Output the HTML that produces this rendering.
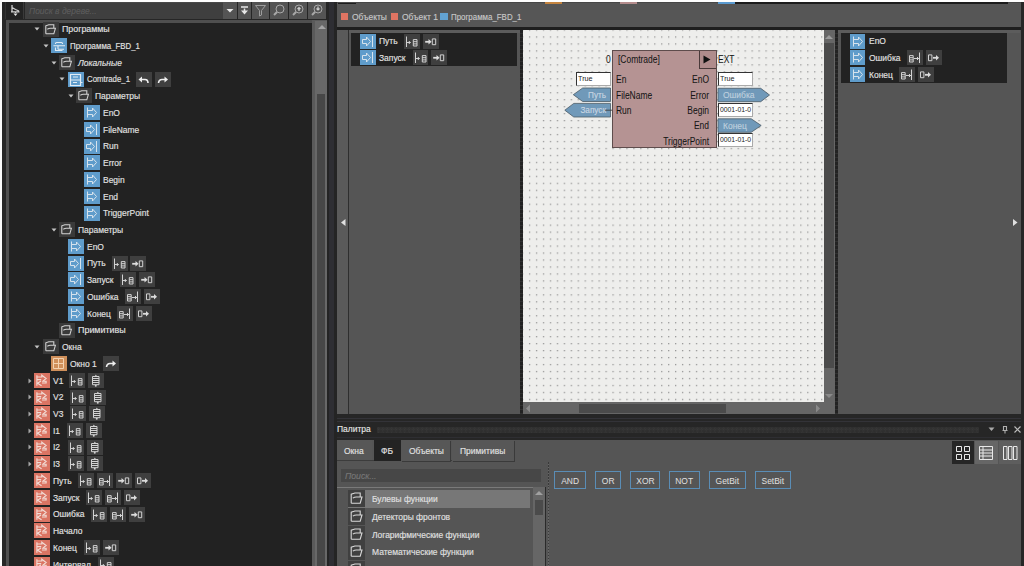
<!DOCTYPE html><html><head><meta charset="utf-8"><style>
html,body{margin:0;padding:0;}
body{width:1024px;height:566px;overflow:hidden;position:relative;background:#262626;font-family:"Liberation Sans",sans-serif;}
div,span,svg{position:absolute;display:block;}
.t{white-space:nowrap;line-height:14px;transform-origin:0 50%;-webkit-text-stroke:0.15px currentColor;}
</style></head><body>
<div style="left:0px;top:0px;width:1024px;height:1.8px;background:#ffffff;"></div>
<div style="left:0px;top:0px;width:2px;height:566px;background:#fafafa;"></div>
<div style="left:2px;top:2px;width:324px;height:564px;background:#262626;"></div>
<div style="left:5px;top:2px;width:19px;height:17px;background:#232323;box-shadow:inset 1px 0 0 #333, inset -1px 0 0 #3a3a3a;"></div>
<svg style="left:9px;top:3.5px;" width="12" height="14" viewBox="0 0 12 14"><path d="M3 1V7.5M3 3.5L6.5 5.5L10 7M2 7.8H10.5M6.5 7.8V9" stroke="#cfcfcf" stroke-width="1.3" fill="none"/><path d="M4.5 9.5H8.5L6.5 12Z" fill="#e6e6e6"/></svg>
<div style="left:25px;top:2px;width:198px;height:17px;background:#3f3f3f;box-shadow:inset 0 1px 0 #4a4a4a;"></div>
<span class="t" style="left:29px;top:3.5px;font-size:9.3px;color:#5c5c5c;transform:scaleX(0.91);font-style:italic;">Поиск в дереве...</span>
<div style="left:223px;top:2px;width:13.5px;height:17px;background:#545454;"></div>
<svg style="left:226px;top:9px;" width="8" height="4" viewBox="0 0 8 4"><path d="M0.5 0H7.5L4 3.5Z" fill="#e8e8e8"/></svg>
<div style="left:237.5px;top:2px;width:13.5px;height:17px;background:#545454;"></div>
<svg style="left:240px;top:6px;" width="9" height="10" viewBox="0 0 9 10"><path d="M1 1H8" stroke="#e8e8e8" stroke-width="1.5"/><path d="M4.5 2.5V5" stroke="#e8e8e8" stroke-width="1.5"/><path d="M1 4.5H8L4.5 8.5Z" fill="#e8e8e8"/></svg>
<div style="left:252px;top:2px;width:17px;height:17px;background:#545454;"></div>
<svg style="left:254px;top:4px;" width="13" height="13" viewBox="0 0 13 13"><path d="M1.5 1.5H11.5L7.5 6.5V11L5.5 12V6.5Z" stroke="#9c9c9c" fill="none" stroke-width="1"/></svg>
<div style="left:270px;top:2px;width:18px;height:17px;background:#545454;"></div>
<svg style="left:272px;top:3px;" width="14" height="14" viewBox="0 0 14 14"><circle cx="8" cy="6" r="4" stroke="#a8a8a8" fill="none" stroke-width="1"/><path d="M5 9L2 12" stroke="#a8a8a8" stroke-width="2"/></svg>
<div style="left:289px;top:2px;width:18px;height:17px;background:#545454;"></div>
<svg style="left:291px;top:3px;" width="14" height="14" viewBox="0 0 14 14"><circle cx="8" cy="6" r="4" stroke="#a8a8a8" fill="none" stroke-width="1"/><path d="M5 9L2 12" stroke="#a8a8a8" stroke-width="2"/><path d="M8 8V4.5M6.5 6L8 4.5L9.5 6" stroke="#cfcfcf" fill="none" stroke-width="1.2"/></svg>
<div style="left:308px;top:2px;width:18px;height:17px;background:#545454;"></div>
<svg style="left:310px;top:3px;" width="14" height="14" viewBox="0 0 14 14"><circle cx="8" cy="6" r="4" stroke="#a8a8a8" fill="none" stroke-width="1"/><path d="M5 9L2 12" stroke="#a8a8a8" stroke-width="2"/><path d="M8 3.5V7M6.5 5.5L8 7L9.5 5.5" stroke="#cfcfcf" fill="none" stroke-width="1.2"/></svg>
<div style="left:6px;top:20px;width:320px;height:546px;background:#4f4f4f;"></div>
<div style="left:8.5px;top:22.7px;width:303.2px;height:544px;background:#222222;"></div>
<div style="left:311.7px;top:20px;width:15.3px;height:546px;background:#5a5a5a;"></div>
<div style="left:315px;top:21px;width:12px;height:545px;background:#686868;"></div>
<svg style="left:316.5px;top:24px;" width="10" height="6" viewBox="0 0 10 6"><path d="M1 5H9L5 1Z" fill="#a4a4a4"/></svg>
<div style="left:316.8px;top:94px;width:8.2px;height:472px;background:#474747;"></div>
<svg style="left:34.15px;top:27.2px;" width="6" height="4" viewBox="0 0 6 4"><path d="M0.5 0.5H5.5L3 3.5Z" fill="#c4c4c4"/></svg>
<svg style="left:42.65px;top:21.5px;background:#3a3a3a;" width="16" height="15" viewBox="0 0 16 15"><path d="M2.8 11.8V3.8L5.8 2.8H10.8V6.3M2.8 11.8H10.8L12.4 6.3H7.4Q5.8 6.3 4.3 7.2" stroke="#d2d2d2" fill="none" stroke-width="1.1"/></svg>
<span class="t" style="left:61.65px;top:22.2px;font-size:9.3px;color:#e2e2e2;transform:scaleX(0.95);">Программы</span>
<svg style="left:42.5px;top:43.93px;" width="6" height="4" viewBox="0 0 6 4"><path d="M0.5 0.5H5.5L3 3.5Z" fill="#c4c4c4"/></svg>
<svg style="left:51.0px;top:38.23px;background:#5f9ccb;" width="16" height="15" viewBox="0 0 16 15"><path d="M4.5 6V5.5Q4.5 4.5 5.5 4.5H10.5Q11.5 4.5 11.5 5.5V6M2.5 7.7H14M4.5 9.5V12.5H11.5M7 7.7V11.3M7 11.3H13" stroke="#e2ecf4" fill="none" stroke-width="1.1"/></svg>
<span class="t" style="left:70.0px;top:38.93px;font-size:9.3px;color:#e2e2e2;transform:scaleX(0.845);">Программа_FBD_1</span>
<svg style="left:50.85px;top:60.66px;" width="6" height="4" viewBox="0 0 6 4"><path d="M0.5 0.5H5.5L3 3.5Z" fill="#c4c4c4"/></svg>
<svg style="left:59.35px;top:54.96px;background:#3a3a3a;" width="16" height="15" viewBox="0 0 16 15"><path d="M2.8 11.8V3.8L5.8 2.8H10.8V6.3M2.8 11.8H10.8L12.4 6.3H7.4Q5.8 6.3 4.3 7.2" stroke="#d2d2d2" fill="none" stroke-width="1.1"/></svg>
<span class="t" style="left:78.35px;top:55.66px;font-size:9.3px;color:#e2e2e2;transform:scaleX(0.91);font-style:italic;">Локальные</span>
<svg style="left:59.2px;top:77.39px;" width="6" height="4" viewBox="0 0 6 4"><path d="M0.5 0.5H5.5L3 3.5Z" fill="#c4c4c4"/></svg>
<svg style="left:67.7px;top:71.69px;background:#5f9ccb;" width="16" height="15" viewBox="0 0 16 15"><path d="M2.5 2.5H12.5V13.5H2.5ZM2.5 8H12.5M5 5H10M5 10.5H9M12.5 10.5H14.5" stroke="#e2ecf4" fill="none" stroke-width="1.2"/></svg>
<span class="t" style="left:86.7px;top:72.39px;font-size:9.3px;color:#e2e2e2;transform:scaleX(0.84);">Comtrade_1</span>
<svg style="left:136.4px;top:71.69px;background:#3f3f3f;" width="16" height="15" viewBox="0 0 16 15"><path d="M4 7.5H9Q12 7.5 12 11" stroke="#f0f0f0" fill="none" stroke-width="1.6"/><path d="M2.5 7.5L6 4.5V10.5Z" fill="#f0f0f0"/></svg>
<svg style="left:155.4px;top:71.69px;background:#3f3f3f;" width="16" height="15" viewBox="0 0 16 15"><path d="M11 7.5H7Q4 7.5 3.5 11" stroke="#f0f0f0" fill="none" stroke-width="1.6"/><path d="M13 7.5L9.5 4.5V10.5Z" fill="#f0f0f0"/></svg>
<svg style="left:67.55px;top:94.12px;" width="6" height="4" viewBox="0 0 6 4"><path d="M0.5 0.5H5.5L3 3.5Z" fill="#c4c4c4"/></svg>
<svg style="left:76.05px;top:88.42px;background:#3a3a3a;" width="16" height="15" viewBox="0 0 16 15"><path d="M2.8 11.8V3.8L5.8 2.8H10.8V6.3M2.8 11.8H10.8L12.4 6.3H7.4Q5.8 6.3 4.3 7.2" stroke="#d2d2d2" fill="none" stroke-width="1.1"/></svg>
<span class="t" style="left:95.05px;top:89.12px;font-size:9.3px;color:#e2e2e2;transform:scaleX(0.91);">Параметры</span>
<svg style="left:84.4px;top:105.15px;background:#5f9ccb;" width="16" height="15" viewBox="0 0 16 15"><path d="M3.5 2.5V12.5M3.5 5.5H8.5V3L12.5 7.5L8.5 12V9.5H3.5" stroke="#d6e2ec" fill="none" stroke-width="1"/></svg>
<span class="t" style="left:103.4px;top:105.85px;font-size:9.3px;color:#e2e2e2;transform:scaleX(0.91);">EnO</span>
<svg style="left:84.4px;top:121.88px;background:#5f9ccb;" width="16" height="15" viewBox="0 0 16 15"><path d="M2.5 5.5H6.5V3L10.5 7.5L6.5 12V9.5H2.5Z M12.5 2V13" stroke="#d6e2ec" fill="none" stroke-width="1"/></svg>
<span class="t" style="left:103.4px;top:122.58000000000001px;font-size:9.3px;color:#e2e2e2;transform:scaleX(0.91);">FileName</span>
<svg style="left:84.4px;top:138.61px;background:#5f9ccb;" width="16" height="15" viewBox="0 0 16 15"><path d="M2.5 5.5H6.5V3L10.5 7.5L6.5 12V9.5H2.5Z M12.5 2V13" stroke="#d6e2ec" fill="none" stroke-width="1"/></svg>
<span class="t" style="left:103.4px;top:139.31px;font-size:9.3px;color:#e2e2e2;transform:scaleX(0.91);">Run</span>
<svg style="left:84.4px;top:155.34px;background:#5f9ccb;" width="16" height="15" viewBox="0 0 16 15"><path d="M3.5 2.5V12.5M3.5 5.5H8.5V3L12.5 7.5L8.5 12V9.5H3.5" stroke="#d6e2ec" fill="none" stroke-width="1"/></svg>
<span class="t" style="left:103.4px;top:156.04px;font-size:9.3px;color:#e2e2e2;transform:scaleX(0.91);">Error</span>
<svg style="left:84.4px;top:172.07px;background:#5f9ccb;" width="16" height="15" viewBox="0 0 16 15"><path d="M3.5 2.5V12.5M3.5 5.5H8.5V3L12.5 7.5L8.5 12V9.5H3.5" stroke="#d6e2ec" fill="none" stroke-width="1"/></svg>
<span class="t" style="left:103.4px;top:172.77px;font-size:9.3px;color:#e2e2e2;transform:scaleX(0.91);">Begin</span>
<svg style="left:84.4px;top:188.8px;background:#5f9ccb;" width="16" height="15" viewBox="0 0 16 15"><path d="M3.5 2.5V12.5M3.5 5.5H8.5V3L12.5 7.5L8.5 12V9.5H3.5" stroke="#d6e2ec" fill="none" stroke-width="1"/></svg>
<span class="t" style="left:103.4px;top:189.5px;font-size:9.3px;color:#e2e2e2;transform:scaleX(0.91);">End</span>
<svg style="left:84.4px;top:205.53px;background:#5f9ccb;" width="16" height="15" viewBox="0 0 16 15"><path d="M3.5 2.5V12.5M3.5 5.5H8.5V3L12.5 7.5L8.5 12V9.5H3.5" stroke="#d6e2ec" fill="none" stroke-width="1"/></svg>
<span class="t" style="left:103.4px;top:206.23px;font-size:9.3px;color:#e2e2e2;transform:scaleX(0.91);">TriggerPoint</span>
<svg style="left:50.85px;top:227.96px;" width="6" height="4" viewBox="0 0 6 4"><path d="M0.5 0.5H5.5L3 3.5Z" fill="#c4c4c4"/></svg>
<svg style="left:59.35px;top:222.26px;background:#3a3a3a;" width="16" height="15" viewBox="0 0 16 15"><path d="M2.8 11.8V3.8L5.8 2.8H10.8V6.3M2.8 11.8H10.8L12.4 6.3H7.4Q5.8 6.3 4.3 7.2" stroke="#d2d2d2" fill="none" stroke-width="1.1"/></svg>
<span class="t" style="left:78.35px;top:222.96px;font-size:9.3px;color:#e2e2e2;transform:scaleX(0.91);">Параметры</span>
<svg style="left:67.7px;top:238.99px;background:#5f9ccb;" width="16" height="15" viewBox="0 0 16 15"><path d="M3.5 2.5V12.5M3.5 5.5H8.5V3L12.5 7.5L8.5 12V9.5H3.5" stroke="#d6e2ec" fill="none" stroke-width="1"/></svg>
<span class="t" style="left:86.7px;top:239.69px;font-size:9.3px;color:#e2e2e2;transform:scaleX(0.91);">EnO</span>
<svg style="left:67.7px;top:255.72px;background:#5f9ccb;" width="16" height="15" viewBox="0 0 16 15"><path d="M2.5 5.5H6.5V3L10.5 7.5L6.5 12V9.5H2.5Z M12.5 2V13" stroke="#d6e2ec" fill="none" stroke-width="1"/></svg>
<span class="t" style="left:86.7px;top:256.42px;font-size:9.3px;color:#e2e2e2;transform:scaleX(0.91);">Путь</span>
<svg style="left:111.8px;top:255.72px;background:#3f3f3f;" width="16" height="15" viewBox="0 0 16 15"><path d="M2.5 2.5V13M3 8.5H6.5M4.8 7L6.3 8.5L4.8 10M9.3 5.6H13V12H9.3ZM9.3 7.7H13M9.3 9.9H13" stroke="#d2d2d2" fill="none" stroke-width="1"/></svg>
<svg style="left:130.2px;top:255.72px;background:#3f3f3f;" width="16" height="15" viewBox="0 0 16 15"><path d="M2.2 7.8H6" stroke="#dcdcdc" stroke-width="1.8"/><path d="M5.5 5L8.6 7.8L5.5 10.6Z" fill="#dcdcdc"/><path d="M9.3 4.9H12.7V10.7H9.3Z" stroke="#d2d2d2" fill="none" stroke-width="1"/></svg>
<svg style="left:67.7px;top:272.45px;background:#5f9ccb;" width="16" height="15" viewBox="0 0 16 15"><path d="M2.5 5.5H6.5V3L10.5 7.5L6.5 12V9.5H2.5Z M12.5 2V13" stroke="#d6e2ec" fill="none" stroke-width="1"/></svg>
<span class="t" style="left:86.7px;top:273.15px;font-size:9.3px;color:#e2e2e2;transform:scaleX(0.91);">Запуск</span>
<svg style="left:120px;top:272.45px;background:#3f3f3f;" width="16" height="15" viewBox="0 0 16 15"><path d="M2.5 2.5V13M3 8.5H6.5M4.8 7L6.3 8.5L4.8 10M9.3 5.6H13V12H9.3ZM9.3 7.7H13M9.3 9.9H13" stroke="#d2d2d2" fill="none" stroke-width="1"/></svg>
<svg style="left:138.9px;top:272.45px;background:#3f3f3f;" width="16" height="15" viewBox="0 0 16 15"><path d="M2.2 7.8H6" stroke="#dcdcdc" stroke-width="1.8"/><path d="M5.5 5L8.6 7.8L5.5 10.6Z" fill="#dcdcdc"/><path d="M9.3 4.9H12.7V10.7H9.3Z" stroke="#d2d2d2" fill="none" stroke-width="1"/></svg>
<svg style="left:67.7px;top:289.18px;background:#5f9ccb;" width="16" height="15" viewBox="0 0 16 15"><path d="M3.5 2.5V12.5M3.5 5.5H8.5V3L12.5 7.5L8.5 12V9.5H3.5" stroke="#d6e2ec" fill="none" stroke-width="1"/></svg>
<span class="t" style="left:86.7px;top:289.88px;font-size:9.3px;color:#e2e2e2;transform:scaleX(0.91);">Ошибка</span>
<svg style="left:124.9px;top:289.18px;background:#3f3f3f;" width="16" height="15" viewBox="0 0 16 15"><path d="M12.5 2.5V13M7 8.5H12M10 7L11.5 8.5L10 10M2.5 5.6H6.2V12H2.5ZM2.5 7.7H6.2M2.5 9.9H6.2" stroke="#d2d2d2" fill="none" stroke-width="1"/></svg>
<svg style="left:143.7px;top:289.18px;background:#3f3f3f;" width="16" height="15" viewBox="0 0 16 15"><path d="M7 7.8H10.5" stroke="#dcdcdc" stroke-width="1.8"/><path d="M10 5L13 7.8L10 10.6Z" fill="#dcdcdc"/><path d="M2.5 4.9H5.9V10.7H2.5Z" stroke="#d2d2d2" fill="none" stroke-width="1"/></svg>
<svg style="left:67.7px;top:305.91px;background:#5f9ccb;" width="16" height="15" viewBox="0 0 16 15"><path d="M3.5 2.5V12.5M3.5 5.5H8.5V3L12.5 7.5L8.5 12V9.5H3.5" stroke="#d6e2ec" fill="none" stroke-width="1"/></svg>
<span class="t" style="left:86.7px;top:306.61px;font-size:9.3px;color:#e2e2e2;transform:scaleX(0.91);">Конец</span>
<svg style="left:117.1px;top:305.91px;background:#3f3f3f;" width="16" height="15" viewBox="0 0 16 15"><path d="M12.5 2.5V13M7 8.5H12M10 7L11.5 8.5L10 10M2.5 5.6H6.2V12H2.5ZM2.5 7.7H6.2M2.5 9.9H6.2" stroke="#d2d2d2" fill="none" stroke-width="1"/></svg>
<svg style="left:135.9px;top:305.91px;background:#3f3f3f;" width="16" height="15" viewBox="0 0 16 15"><path d="M7 7.8H10.5" stroke="#dcdcdc" stroke-width="1.8"/><path d="M10 5L13 7.8L10 10.6Z" fill="#dcdcdc"/><path d="M2.5 4.9H5.9V10.7H2.5Z" stroke="#d2d2d2" fill="none" stroke-width="1"/></svg>
<svg style="left:59.35px;top:322.64px;background:#3a3a3a;" width="16" height="15" viewBox="0 0 16 15"><path d="M2.8 11.8V3.8L5.8 2.8H10.8V6.3M2.8 11.8H10.8L12.4 6.3H7.4Q5.8 6.3 4.3 7.2" stroke="#d2d2d2" fill="none" stroke-width="1.1"/></svg>
<span class="t" style="left:78.35px;top:323.34px;font-size:9.3px;color:#e2e2e2;transform:scaleX(0.96);">Примитивы</span>
<svg style="left:34.15px;top:345.07px;" width="6" height="4" viewBox="0 0 6 4"><path d="M0.5 0.5H5.5L3 3.5Z" fill="#c4c4c4"/></svg>
<svg style="left:42.65px;top:339.37px;background:#3a3a3a;" width="16" height="15" viewBox="0 0 16 15"><path d="M2.8 11.8V3.8L5.8 2.8H10.8V6.3M2.8 11.8H10.8L12.4 6.3H7.4Q5.8 6.3 4.3 7.2" stroke="#d2d2d2" fill="none" stroke-width="1.1"/></svg>
<span class="t" style="left:61.65px;top:340.07px;font-size:9.3px;color:#e2e2e2;transform:scaleX(0.91);">Окна</span>
<svg style="left:51.0px;top:356.1px;background:#cf8f5a;" width="16" height="15" viewBox="0 0 16 15"><path d="M2.5 2.5H12.5V12.5H2.5ZM2.5 7.5H12.5M7.5 2.5V12.5" stroke="#f3d2b0" fill="none" stroke-width="1"/></svg>
<span class="t" style="left:70.0px;top:356.8px;font-size:9.3px;color:#e2e2e2;transform:scaleX(0.91);">Окно 1</span>
<svg style="left:102.8px;top:356.1px;background:#3f3f3f;" width="16" height="15" viewBox="0 0 16 15"><path d="M11 7.5H7Q4 7.5 3.5 11" stroke="#f0f0f0" fill="none" stroke-width="1.6"/><path d="M13 7.5L9.5 4.5V10.5Z" fill="#f0f0f0"/></svg>
<svg style="left:27.8px;top:377.53px;" width="4" height="6" viewBox="0 0 4 6"><path d="M0.5 0.5V5.5L3.5 3Z" fill="#a8a8a8"/></svg>
<svg style="left:34.3px;top:372.83px;background:#da7463;" width="16" height="15" viewBox="0 0 16 15"><path d="M2.9 2.2V12.7M2.9 4H7.8V2.2L12.1 5.5L8.3 8.6M2.9 6.6H7.2M8.8 8.2H12.1V10H8M7 7.9L3.5 10.2L7.6 12.7" stroke="#f2dcd6" fill="none" stroke-width="1.15"/></svg>
<span class="t" style="left:53.3px;top:373.53px;font-size:9.3px;color:#e2e2e2;transform:scaleX(0.91);">V1</span>
<svg style="left:69.2px;top:372.83px;background:#3f3f3f;" width="16" height="15" viewBox="0 0 16 15"><path d="M2.5 2.5V13M3 8.5H6.5M4.8 7L6.3 8.5L4.8 10M9.3 5.6H13V12H9.3ZM9.3 7.7H13M9.3 9.9H13" stroke="#d2d2d2" fill="none" stroke-width="1"/></svg>
<svg style="left:88px;top:372.83px;background:#3f3f3f;" width="16" height="15" viewBox="0 0 16 15"><path d="M4.5 3.5H11V11.7H4.5ZM4.5 5.5H11M4.5 7.5H11M4.5 9.5H11M6.5 3.5L7.75 2.3L9 3.5" stroke="#d2d2d2" fill="none" stroke-width="1"/><circle cx="7.75" cy="12.8" r="1" fill="#d2d2d2"/></svg>
<svg style="left:27.8px;top:394.26px;" width="4" height="6" viewBox="0 0 4 6"><path d="M0.5 0.5V5.5L3.5 3Z" fill="#a8a8a8"/></svg>
<svg style="left:34.3px;top:389.56px;background:#da7463;" width="16" height="15" viewBox="0 0 16 15"><path d="M2.9 2.2V12.7M2.9 4H7.8V2.2L12.1 5.5L8.3 8.6M2.9 6.6H7.2M8.8 8.2H12.1V10H8M7 7.9L3.5 10.2L7.6 12.7" stroke="#f2dcd6" fill="none" stroke-width="1.15"/></svg>
<span class="t" style="left:53.3px;top:390.26px;font-size:9.3px;color:#e2e2e2;transform:scaleX(0.91);">V2</span>
<svg style="left:70.4px;top:389.56px;background:#3f3f3f;" width="16" height="15" viewBox="0 0 16 15"><path d="M2.5 2.5V13M3 8.5H6.5M4.8 7L6.3 8.5L4.8 10M9.3 5.6H13V12H9.3ZM9.3 7.7H13M9.3 9.9H13" stroke="#d2d2d2" fill="none" stroke-width="1"/></svg>
<svg style="left:89.5px;top:389.56px;background:#3f3f3f;" width="16" height="15" viewBox="0 0 16 15"><path d="M4.5 3.5H11V11.7H4.5ZM4.5 5.5H11M4.5 7.5H11M4.5 9.5H11M6.5 3.5L7.75 2.3L9 3.5" stroke="#d2d2d2" fill="none" stroke-width="1"/><circle cx="7.75" cy="12.8" r="1" fill="#d2d2d2"/></svg>
<svg style="left:27.8px;top:410.99px;" width="4" height="6" viewBox="0 0 4 6"><path d="M0.5 0.5V5.5L3.5 3Z" fill="#a8a8a8"/></svg>
<svg style="left:34.3px;top:406.29px;background:#da7463;" width="16" height="15" viewBox="0 0 16 15"><path d="M2.9 2.2V12.7M2.9 4H7.8V2.2L12.1 5.5L8.3 8.6M2.9 6.6H7.2M8.8 8.2H12.1V10H8M7 7.9L3.5 10.2L7.6 12.7" stroke="#f2dcd6" fill="none" stroke-width="1.15"/></svg>
<span class="t" style="left:53.3px;top:406.99px;font-size:9.3px;color:#e2e2e2;transform:scaleX(0.91);">V3</span>
<svg style="left:70.3px;top:406.29px;background:#3f3f3f;" width="16" height="15" viewBox="0 0 16 15"><path d="M2.5 2.5V13M3 8.5H6.5M4.8 7L6.3 8.5L4.8 10M9.3 5.6H13V12H9.3ZM9.3 7.7H13M9.3 9.9H13" stroke="#d2d2d2" fill="none" stroke-width="1"/></svg>
<svg style="left:89px;top:406.29px;background:#3f3f3f;" width="16" height="15" viewBox="0 0 16 15"><path d="M4.5 3.5H11V11.7H4.5ZM4.5 5.5H11M4.5 7.5H11M4.5 9.5H11M6.5 3.5L7.75 2.3L9 3.5" stroke="#d2d2d2" fill="none" stroke-width="1"/><circle cx="7.75" cy="12.8" r="1" fill="#d2d2d2"/></svg>
<svg style="left:27.8px;top:427.72px;" width="4" height="6" viewBox="0 0 4 6"><path d="M0.5 0.5V5.5L3.5 3Z" fill="#a8a8a8"/></svg>
<svg style="left:34.3px;top:423.02px;background:#da7463;" width="16" height="15" viewBox="0 0 16 15"><path d="M2.9 2.2V12.7M2.9 4H7.8V2.2L12.1 5.5L8.3 8.6M2.9 6.6H7.2M8.8 8.2H12.1V10H8M7 7.9L3.5 10.2L7.6 12.7" stroke="#f2dcd6" fill="none" stroke-width="1.15"/></svg>
<span class="t" style="left:53.3px;top:423.72px;font-size:9.3px;color:#e2e2e2;transform:scaleX(0.91);">I1</span>
<svg style="left:67.2px;top:423.02px;background:#3f3f3f;" width="16" height="15" viewBox="0 0 16 15"><path d="M2.5 2.5V13M3 8.5H6.5M4.8 7L6.3 8.5L4.8 10M9.3 5.6H13V12H9.3ZM9.3 7.7H13M9.3 9.9H13" stroke="#d2d2d2" fill="none" stroke-width="1"/></svg>
<svg style="left:85.6px;top:423.02px;background:#3f3f3f;" width="16" height="15" viewBox="0 0 16 15"><path d="M4.5 3.5H11V11.7H4.5ZM4.5 5.5H11M4.5 7.5H11M4.5 9.5H11M6.5 3.5L7.75 2.3L9 3.5" stroke="#d2d2d2" fill="none" stroke-width="1"/><circle cx="7.75" cy="12.8" r="1" fill="#d2d2d2"/></svg>
<svg style="left:27.8px;top:444.45px;" width="4" height="6" viewBox="0 0 4 6"><path d="M0.5 0.5V5.5L3.5 3Z" fill="#a8a8a8"/></svg>
<svg style="left:34.3px;top:439.75px;background:#da7463;" width="16" height="15" viewBox="0 0 16 15"><path d="M2.9 2.2V12.7M2.9 4H7.8V2.2L12.1 5.5L8.3 8.6M2.9 6.6H7.2M8.8 8.2H12.1V10H8M7 7.9L3.5 10.2L7.6 12.7" stroke="#f2dcd6" fill="none" stroke-width="1.15"/></svg>
<span class="t" style="left:53.3px;top:440.45px;font-size:9.3px;color:#e2e2e2;transform:scaleX(0.91);">I2</span>
<svg style="left:67.6px;top:439.75px;background:#3f3f3f;" width="16" height="15" viewBox="0 0 16 15"><path d="M2.5 2.5V13M3 8.5H6.5M4.8 7L6.3 8.5L4.8 10M9.3 5.6H13V12H9.3ZM9.3 7.7H13M9.3 9.9H13" stroke="#d2d2d2" fill="none" stroke-width="1"/></svg>
<svg style="left:86.6px;top:439.75px;background:#3f3f3f;" width="16" height="15" viewBox="0 0 16 15"><path d="M4.5 3.5H11V11.7H4.5ZM4.5 5.5H11M4.5 7.5H11M4.5 9.5H11M6.5 3.5L7.75 2.3L9 3.5" stroke="#d2d2d2" fill="none" stroke-width="1"/><circle cx="7.75" cy="12.8" r="1" fill="#d2d2d2"/></svg>
<svg style="left:27.8px;top:461.18px;" width="4" height="6" viewBox="0 0 4 6"><path d="M0.5 0.5V5.5L3.5 3Z" fill="#a8a8a8"/></svg>
<svg style="left:34.3px;top:456.48px;background:#da7463;" width="16" height="15" viewBox="0 0 16 15"><path d="M2.9 2.2V12.7M2.9 4H7.8V2.2L12.1 5.5L8.3 8.6M2.9 6.6H7.2M8.8 8.2H12.1V10H8M7 7.9L3.5 10.2L7.6 12.7" stroke="#f2dcd6" fill="none" stroke-width="1.15"/></svg>
<span class="t" style="left:53.3px;top:457.18px;font-size:9.3px;color:#e2e2e2;transform:scaleX(0.91);">I3</span>
<svg style="left:67.6px;top:456.48px;background:#3f3f3f;" width="16" height="15" viewBox="0 0 16 15"><path d="M2.5 2.5V13M3 8.5H6.5M4.8 7L6.3 8.5L4.8 10M9.3 5.6H13V12H9.3ZM9.3 7.7H13M9.3 9.9H13" stroke="#d2d2d2" fill="none" stroke-width="1"/></svg>
<svg style="left:86.6px;top:456.48px;background:#3f3f3f;" width="16" height="15" viewBox="0 0 16 15"><path d="M4.5 3.5H11V11.7H4.5ZM4.5 5.5H11M4.5 7.5H11M4.5 9.5H11M6.5 3.5L7.75 2.3L9 3.5" stroke="#d2d2d2" fill="none" stroke-width="1"/><circle cx="7.75" cy="12.8" r="1" fill="#d2d2d2"/></svg>
<svg style="left:34.3px;top:473.21px;background:#da7463;" width="16" height="15" viewBox="0 0 16 15"><path d="M2.9 2.2V12.7M2.9 4H7.8V2.2L12.1 5.5L8.3 8.6M2.9 6.6H7.2M8.8 8.2H12.1V10H8M7 7.9L3.5 10.2L7.6 12.7" stroke="#f2dcd6" fill="none" stroke-width="1.15"/></svg>
<span class="t" style="left:53.3px;top:473.91px;font-size:9.3px;color:#e2e2e2;transform:scaleX(0.91);">Путь</span>
<svg style="left:78px;top:473.21px;background:#3f3f3f;" width="16" height="15" viewBox="0 0 16 15"><path d="M2.5 2.5V13M3 8.5H6.5M4.8 7L6.3 8.5L4.8 10M9.3 5.6H13V12H9.3ZM9.3 7.7H13M9.3 9.9H13" stroke="#d2d2d2" fill="none" stroke-width="1"/></svg>
<svg style="left:97.1px;top:473.21px;background:#3f3f3f;" width="16" height="15" viewBox="0 0 16 15"><path d="M12.5 2.5V13M7 8.5H12M10 7L11.5 8.5L10 10M2.5 5.6H6.2V12H2.5ZM2.5 7.7H6.2M2.5 9.9H6.2" stroke="#d2d2d2" fill="none" stroke-width="1"/></svg>
<svg style="left:116.1px;top:473.21px;background:#3f3f3f;" width="16" height="15" viewBox="0 0 16 15"><path d="M2.2 7.8H6" stroke="#dcdcdc" stroke-width="1.8"/><path d="M5.5 5L8.6 7.8L5.5 10.6Z" fill="#dcdcdc"/><path d="M9.3 4.9H12.7V10.7H9.3Z" stroke="#d2d2d2" fill="none" stroke-width="1"/></svg>
<svg style="left:135.2px;top:473.21px;background:#3f3f3f;" width="16" height="15" viewBox="0 0 16 15"><path d="M7 7.8H10.5" stroke="#dcdcdc" stroke-width="1.8"/><path d="M10 5L13 7.8L10 10.6Z" fill="#dcdcdc"/><path d="M2.5 4.9H5.9V10.7H2.5Z" stroke="#d2d2d2" fill="none" stroke-width="1"/></svg>
<svg style="left:34.3px;top:489.94px;background:#da7463;" width="16" height="15" viewBox="0 0 16 15"><path d="M2.9 2.2V12.7M2.9 4H7.8V2.2L12.1 5.5L8.3 8.6M2.9 6.6H7.2M8.8 8.2H12.1V10H8M7 7.9L3.5 10.2L7.6 12.7" stroke="#f2dcd6" fill="none" stroke-width="1.15"/></svg>
<span class="t" style="left:53.3px;top:490.64px;font-size:9.3px;color:#e2e2e2;transform:scaleX(0.91);">Запуск</span>
<svg style="left:86.2px;top:489.94px;background:#3f3f3f;" width="16" height="15" viewBox="0 0 16 15"><path d="M2.5 2.5V13M3 8.5H6.5M4.8 7L6.3 8.5L4.8 10M9.3 5.6H13V12H9.3ZM9.3 7.7H13M9.3 9.9H13" stroke="#d2d2d2" fill="none" stroke-width="1"/></svg>
<svg style="left:105.2px;top:489.94px;background:#3f3f3f;" width="16" height="15" viewBox="0 0 16 15"><path d="M12.5 2.5V13M7 8.5H12M10 7L11.5 8.5L10 10M2.5 5.6H6.2V12H2.5ZM2.5 7.7H6.2M2.5 9.9H6.2" stroke="#d2d2d2" fill="none" stroke-width="1"/></svg>
<svg style="left:124.3px;top:489.94px;background:#3f3f3f;" width="16" height="15" viewBox="0 0 16 15"><path d="M7 7.8H10.5" stroke="#dcdcdc" stroke-width="1.8"/><path d="M10 5L13 7.8L10 10.6Z" fill="#dcdcdc"/><path d="M2.5 4.9H5.9V10.7H2.5Z" stroke="#d2d2d2" fill="none" stroke-width="1"/></svg>
<svg style="left:34.3px;top:506.67px;background:#da7463;" width="16" height="15" viewBox="0 0 16 15"><path d="M2.9 2.2V12.7M2.9 4H7.8V2.2L12.1 5.5L8.3 8.6M2.9 6.6H7.2M8.8 8.2H12.1V10H8M7 7.9L3.5 10.2L7.6 12.7" stroke="#f2dcd6" fill="none" stroke-width="1.15"/></svg>
<span class="t" style="left:53.3px;top:507.37px;font-size:9.3px;color:#e2e2e2;transform:scaleX(0.91);">Ошибка</span>
<svg style="left:91.4px;top:506.67px;background:#3f3f3f;" width="16" height="15" viewBox="0 0 16 15"><path d="M2.5 2.5V13M3 8.5H6.5M4.8 7L6.3 8.5L4.8 10M9.3 5.6H13V12H9.3ZM9.3 7.7H13M9.3 9.9H13" stroke="#d2d2d2" fill="none" stroke-width="1"/></svg>
<svg style="left:110px;top:506.67px;background:#3f3f3f;" width="16" height="15" viewBox="0 0 16 15"><path d="M12.5 2.5V13M7 8.5H12M10 7L11.5 8.5L10 10M2.5 5.6H6.2V12H2.5ZM2.5 7.7H6.2M2.5 9.9H6.2" stroke="#d2d2d2" fill="none" stroke-width="1"/></svg>
<svg style="left:129.1px;top:506.67px;background:#3f3f3f;" width="16" height="15" viewBox="0 0 16 15"><path d="M2.2 7.8H6" stroke="#dcdcdc" stroke-width="1.8"/><path d="M5.5 5L8.6 7.8L5.5 10.6Z" fill="#dcdcdc"/><path d="M9.3 4.9H12.7V10.7H9.3Z" stroke="#d2d2d2" fill="none" stroke-width="1"/></svg>
<svg style="left:34.3px;top:523.4px;background:#da7463;" width="16" height="15" viewBox="0 0 16 15"><path d="M2.9 2.2V12.7M2.9 4H7.8V2.2L12.1 5.5L8.3 8.6M2.9 6.6H7.2M8.8 8.2H12.1V10H8M7 7.9L3.5 10.2L7.6 12.7" stroke="#f2dcd6" fill="none" stroke-width="1.15"/></svg>
<span class="t" style="left:53.3px;top:524.1px;font-size:9.3px;color:#e2e2e2;transform:scaleX(0.91);">Начало</span>
<svg style="left:34.3px;top:540.13px;background:#da7463;" width="16" height="15" viewBox="0 0 16 15"><path d="M2.9 2.2V12.7M2.9 4H7.8V2.2L12.1 5.5L8.3 8.6M2.9 6.6H7.2M8.8 8.2H12.1V10H8M7 7.9L3.5 10.2L7.6 12.7" stroke="#f2dcd6" fill="none" stroke-width="1.15"/></svg>
<span class="t" style="left:53.3px;top:540.83px;font-size:9.3px;color:#e2e2e2;transform:scaleX(0.91);">Конец</span>
<svg style="left:84.1px;top:540.13px;background:#3f3f3f;" width="16" height="15" viewBox="0 0 16 15"><path d="M2.5 2.5V13M3 8.5H6.5M4.8 7L6.3 8.5L4.8 10M9.3 5.6H13V12H9.3ZM9.3 7.7H13M9.3 9.9H13" stroke="#d2d2d2" fill="none" stroke-width="1"/></svg>
<svg style="left:102.8px;top:540.13px;background:#3f3f3f;" width="16" height="15" viewBox="0 0 16 15"><path d="M2.2 7.8H6" stroke="#dcdcdc" stroke-width="1.8"/><path d="M5.5 5L8.6 7.8L5.5 10.6Z" fill="#dcdcdc"/><path d="M9.3 4.9H12.7V10.7H9.3Z" stroke="#d2d2d2" fill="none" stroke-width="1"/></svg>
<svg style="left:34.3px;top:556.86px;background:#da7463;" width="16" height="15" viewBox="0 0 16 15"><path d="M2.9 2.2V12.7M2.9 4H7.8V2.2L12.1 5.5L8.3 8.6M2.9 6.6H7.2M8.8 8.2H12.1V10H8M7 7.9L3.5 10.2L7.6 12.7" stroke="#f2dcd6" fill="none" stroke-width="1.15"/></svg>
<span class="t" style="left:53.3px;top:557.56px;font-size:9.3px;color:#e2e2e2;transform:scaleX(0.91);">Интервал</span>
<svg style="left:97.6px;top:556.86px;background:#3f3f3f;" width="16" height="15" viewBox="0 0 16 15"><path d="M2.5 2.5V13M3 8.5H6.5M4.8 7L6.3 8.5L4.8 10M9.3 5.6H13V12H9.3ZM9.3 7.7H13M9.3 9.9H13" stroke="#d2d2d2" fill="none" stroke-width="1"/></svg>
<div style="left:327px;top:20px;width:9.5px;height:546px;background:#242424;"></div>
<div style="left:326px;top:2px;width:10.5px;height:18px;background:#262626;"></div>
<div style="left:328.8px;top:2px;width:5.5px;height:564px;background:#2e2e33;"></div>
<div style="left:336.5px;top:2px;width:684.5px;height:25px;background:#565656;"></div>
<div style="left:1021px;top:2px;width:3px;height:564px;background:#262626;"></div>
<div style="left:338px;top:2px;width:17.5px;height:2px;background:#1c1c1c;"></div>
<div style="left:336.5px;top:2px;width:684.5px;height:1px;background:#484848;"></div>
<div style="left:544.6px;top:2px;width:17px;height:2px;background:#c4843f;"></div>
<div style="left:619.5px;top:2px;width:17.5px;height:2px;background:#b48c8c;"></div>
<div style="left:718px;top:2px;width:17px;height:2px;background:#5a9ad0;"></div>
<div style="left:735px;top:2px;width:272.5px;height:2px;background:#1c1c1c;"></div>
<div style="left:341px;top:13px;width:7px;height:7px;background:#e07462;"></div>
<span class="t" style="left:352px;top:9.5px;font-size:9.3px;color:#c8c8c8;transform:scaleX(0.91);">Объекты</span>
<div style="left:391px;top:13px;width:7px;height:7px;background:#e07462;"></div>
<span class="t" style="left:402px;top:9.5px;font-size:9.3px;color:#c8c8c8;transform:scaleX(0.91);">Объект 1</span>
<div style="left:440px;top:13px;width:7.5px;height:7px;background:#62a2d2;"></div>
<span class="t" style="left:451px;top:9.5px;font-size:9.3px;color:#c8c8c8;transform:scaleX(0.85);">Программа_FBD_1</span>
<div style="left:336.5px;top:27px;width:684.5px;height:3px;background:#1e1e1e;"></div>
<div style="left:336.5px;top:30px;width:684.5px;height:384px;background:#555555;"></div>
<div style="left:337px;top:30px;width:11px;height:384px;background:#5a5a5a;"></div>
<div style="left:348px;top:30px;width:1px;height:384px;background:#2e2e2e;"></div>
<div style="left:349px;top:30px;width:171px;height:3px;background:#5c5c5c;"></div>
<div style="left:351px;top:33px;width:165.5px;height:33px;background:#222222;"></div>
<svg style="left:341px;top:219px;" width="5" height="7" viewBox="0 0 5 7"><path d="M4.5 0V7L0 3.5Z" fill="#e0e0e0"/></svg>
<svg style="left:360px;top:33.8px;background:#5f9ccb;" width="16" height="15" viewBox="0 0 16 15"><path d="M2.5 5.5H6.5V3L10.5 7.5L6.5 12V9.5H2.5Z M12.5 2V13" stroke="#d6e2ec" fill="none" stroke-width="1"/></svg>
<span class="t" style="left:379px;top:34.3px;font-size:9.3px;color:#e2e2e2;transform:scaleX(0.91);">Путь</span>
<svg style="left:404.3px;top:33.8px;background:#3f3f3f;" width="15.5" height="15" viewBox="0 0 15.5 15"><path d="M2.5 2.5V13M3 8.5H6.5M4.8 7L6.3 8.5L4.8 10M9.3 5.6H13V12H9.3ZM9.3 7.7H13M9.3 9.9H13" stroke="#d2d2d2" fill="none" stroke-width="1"/></svg>
<svg style="left:423px;top:33.8px;background:#3f3f3f;" width="15.5" height="15" viewBox="0 0 15.5 15"><path d="M2.2 7.8H6" stroke="#dcdcdc" stroke-width="1.8"/><path d="M5.5 5L8.6 7.8L5.5 10.6Z" fill="#dcdcdc"/><path d="M9.3 4.9H12.7V10.7H9.3Z" stroke="#d2d2d2" fill="none" stroke-width="1"/></svg>
<svg style="left:360px;top:50.199999999999996px;background:#5f9ccb;" width="16" height="15" viewBox="0 0 16 15"><path d="M2.5 5.5H6.5V3L10.5 7.5L6.5 12V9.5H2.5Z M12.5 2V13" stroke="#d6e2ec" fill="none" stroke-width="1"/></svg>
<span class="t" style="left:379px;top:50.699999999999996px;font-size:9.3px;color:#e2e2e2;transform:scaleX(0.91);">Запуск</span>
<svg style="left:412.6px;top:50.199999999999996px;background:#3f3f3f;" width="15.5" height="15" viewBox="0 0 15.5 15"><path d="M2.5 2.5V13M3 8.5H6.5M4.8 7L6.3 8.5L4.8 10M9.3 5.6H13V12H9.3ZM9.3 7.7H13M9.3 9.9H13" stroke="#d2d2d2" fill="none" stroke-width="1"/></svg>
<svg style="left:431px;top:50.199999999999996px;background:#3f3f3f;" width="15.5" height="15" viewBox="0 0 15.5 15"><path d="M2.2 7.8H6" stroke="#dcdcdc" stroke-width="1.8"/><path d="M5.5 5L8.6 7.8L5.5 10.6Z" fill="#dcdcdc"/><path d="M9.3 4.9H12.7V10.7H9.3Z" stroke="#d2d2d2" fill="none" stroke-width="1"/></svg>
<div style="left:520px;top:30px;width:2.5px;height:384px;background:repeating-linear-gradient(to bottom,#222 0 3px,#303030 3px 4px);"></div>
<svg style="left:522.5px;top:30px;background:#eeeeec" width="301" height="372" viewBox="0 0 301 372">
<defs><pattern id="dots" x="5.95" y="6.35" width="6.955" height="6.97" patternUnits="userSpaceOnUse"><rect x="0" y="0" width="1.3" height="1.3" fill="#979797"/></pattern></defs>
<rect x="0" y="0" width="301" height="372" fill="url(#dots)"/>
</svg>
<div style="left:823.5px;top:30px;width:11.5px;height:384px;background:#666666;"></div>
<div style="left:823.5px;top:43px;width:10.5px;height:325px;background:#4b4b4b;"></div>
<svg style="left:824px;top:34px;" width="10" height="6" viewBox="0 0 10 6"><path d="M1 5H9L5 1Z" fill="#9a9a9a"/></svg>
<svg style="left:824px;top:393px;" width="10" height="6" viewBox="0 0 10 6"><path d="M1 1H9L5 5Z" fill="#8a8a8a"/></svg>
<div style="left:522.5px;top:402px;width:301px;height:12px;background:#666666;"></div>
<div style="left:579.4px;top:403.7px;width:147px;height:9.5px;background:#4b4b4b;"></div>
<svg style="left:525px;top:404px;" width="6" height="9" viewBox="0 0 6 9"><path d="M5 0.5V8.5L1 4.5Z" fill="#8a8a8a"/></svg>
<svg style="left:815px;top:404px;" width="6" height="9" viewBox="0 0 6 9"><path d="M1 0.5V8.5L5 4.5Z" fill="#8a8a8a"/></svg>
<div style="left:835px;top:30px;width:3px;height:384px;background:repeating-linear-gradient(to bottom,#222 0 3px,#303030 3px 4px);"></div>
<div style="left:838px;top:30px;width:182px;height:3px;background:#5c5c5c;"></div>
<div style="left:841px;top:33px;width:166px;height:49.5px;background:#222222;"></div>
<svg style="left:1012.5px;top:219px;" width="5" height="7" viewBox="0 0 5 7"><path d="M0 0V7L4.5 3.5Z" fill="#e0e0e0"/></svg>
<svg style="left:849.6px;top:33.8px;background:#5f9ccb;" width="15.5" height="15" viewBox="0 0 15.5 15"><path d="M3.5 2.5V12.5M3.5 5.5H8.5V3L12.5 7.5L8.5 12V9.5H3.5" stroke="#d6e2ec" fill="none" stroke-width="1"/></svg>
<span class="t" style="left:868.7px;top:34.3px;font-size:9.3px;color:#e2e2e2;transform:scaleX(0.91);">EnO</span>
<svg style="left:849.6px;top:50.4px;background:#5f9ccb;" width="15.5" height="15" viewBox="0 0 15.5 15"><path d="M3.5 2.5V12.5M3.5 5.5H8.5V3L12.5 7.5L8.5 12V9.5H3.5" stroke="#d6e2ec" fill="none" stroke-width="1"/></svg>
<span class="t" style="left:868.7px;top:50.9px;font-size:9.3px;color:#e2e2e2;transform:scaleX(0.91);">Ошибка</span>
<svg style="left:907px;top:50.4px;background:#3f3f3f;" width="15.5" height="15" viewBox="0 0 15.5 15"><path d="M12.5 2.5V13M7 8.5H12M10 7L11.5 8.5L10 10M2.5 5.6H6.2V12H2.5ZM2.5 7.7H6.2M2.5 9.9H6.2" stroke="#d2d2d2" fill="none" stroke-width="1"/></svg>
<svg style="left:926px;top:50.4px;background:#3f3f3f;" width="15.5" height="15" viewBox="0 0 15.5 15"><path d="M7 7.8H10.5" stroke="#dcdcdc" stroke-width="1.8"/><path d="M10 5L13 7.8L10 10.6Z" fill="#dcdcdc"/><path d="M2.5 4.9H5.9V10.7H2.5Z" stroke="#d2d2d2" fill="none" stroke-width="1"/></svg>
<svg style="left:849.6px;top:67.0px;background:#5f9ccb;" width="15.5" height="15" viewBox="0 0 15.5 15"><path d="M3.5 2.5V12.5M3.5 5.5H8.5V3L12.5 7.5L8.5 12V9.5H3.5" stroke="#d6e2ec" fill="none" stroke-width="1"/></svg>
<span class="t" style="left:868.7px;top:67.5px;font-size:9.3px;color:#e2e2e2;transform:scaleX(0.91);">Конец</span>
<svg style="left:899.2px;top:67.0px;background:#3f3f3f;" width="15.5" height="15" viewBox="0 0 15.5 15"><path d="M12.5 2.5V13M7 8.5H12M10 7L11.5 8.5L10 10M2.5 5.6H6.2V12H2.5ZM2.5 7.7H6.2M2.5 9.9H6.2" stroke="#d2d2d2" fill="none" stroke-width="1"/></svg>
<svg style="left:918.2px;top:67.0px;background:#3f3f3f;" width="15.5" height="15" viewBox="0 0 15.5 15"><path d="M7 7.8H10.5" stroke="#dcdcdc" stroke-width="1.8"/><path d="M10 5L13 7.8L10 10.6Z" fill="#dcdcdc"/><path d="M2.5 4.9H5.9V10.7H2.5Z" stroke="#d2d2d2" fill="none" stroke-width="1"/></svg>
<div style="left:336.5px;top:414px;width:684.5px;height:152px;background:#262626;"></div>
<div style="left:336.5px;top:417.5px;width:684.5px;height:1px;background:#333338;"></div>
<div style="left:336.5px;top:421px;width:684.5px;height:1px;background:#333338;"></div>
<div style="left:336.5px;top:427px;width:642px;height:6px;background:radial-gradient(circle,#3a3a3a 0.7px,transparent 1px) 0 0/2.6px 2.6px,radial-gradient(circle,#3a3a3a 0.7px,transparent 1px) 1.3px 1.3px/2.6px 2.6px;"></div>
<div style="left:336.5px;top:437px;width:684.5px;height:1px;background:#2e2e32;"></div>
<div style="left:336.5px;top:423px;width:40px;height:12px;background:#262626;"></div>
<span class="t" style="left:337px;top:422px;font-size:9.3px;color:#e6e6e6;transform:scaleX(0.91);">Палитра</span>
<svg style="left:988px;top:427px;" width="8" height="5" viewBox="0 0 8 5"><path d="M0.5 0.5H6.5L3.5 4Z" fill="#aaaaaa"/></svg>
<svg style="left:1000.5px;top:425px;" width="8" height="10" viewBox="0 0 8 10"><path d="M2.5 1.5H5.5V5.5H2.5Z M1.5 5.5H6.5M4 5.5V8.5" stroke="#b0b0b0" fill="none" stroke-width="1.1"/></svg>
<svg style="left:1013px;top:425px;" width="9" height="9" viewBox="0 0 9 9"><path d="M1.5 1.5L7.5 7.5M7.5 1.5L1.5 7.5" stroke="#bcbcbc" stroke-width="1.2"/></svg>
<div style="left:336.5px;top:440px;width:684.5px;height:126px;background:#555555;"></div>
<div style="left:336.5px;top:440px;width:35.5px;height:20.5px;background:#575757;"></div>
<span class="t" style="left:344.3px;top:443.5px;font-size:9.3px;color:#e2e2e2;transform:scaleX(0.91);">Окна</span>
<div style="left:336.5px;top:460px;width:177.5px;height:1px;background:#3c3c3c;"></div>
<div style="left:374px;top:440px;width:26.5px;height:20.5px;background:#232323;"></div>
<span class="t" style="left:380.5px;top:443.5px;font-size:9.3px;color:#e2e2e2;transform:scaleX(0.91);">ФБ</span>
<div style="left:401.2px;top:440px;width:49.3px;height:20.5px;background:#575757;box-shadow:1px 1px 0 #3a3a3a;"></div>
<span class="t" style="left:409px;top:443.5px;font-size:9.3px;color:#e2e2e2;transform:scaleX(0.91);">Объекты</span>
<div style="left:451.5px;top:440px;width:62px;height:20.5px;background:#575757;box-shadow:1px 1px 0 #3a3a3a;"></div>
<span class="t" style="left:459.5px;top:443.5px;font-size:9.3px;color:#e2e2e2;transform:scaleX(0.91);">Примитивы</span>
<div style="left:341px;top:468.5px;width:200px;height:13.5px;background:#474747;"></div>
<span class="t" style="left:345px;top:468.5px;font-size:9.5px;color:#777777;transform:scaleX(0.91);font-style:italic;">Поиск...</span>
<div style="left:336.5px;top:486.5px;width:197px;height:1.2px;background:#7a7a7a;"></div>
<div style="left:348px;top:490px;width:182px;height:17.8px;background:#777777;"></div>
<svg style="left:348.3px;top:490.0px;background:#404040;" width="17" height="17" viewBox="0 0 17 17"><path d="M3.2 13.2V4.1L6.9 3H12.2V7M3.2 13.2H12.2L14 7H8.3Q6.5 7 4.8 8.1" stroke="#d8d8d8" fill="none" stroke-width="1.1"/></svg>
<span class="t" style="left:372px;top:492.0px;font-size:9.3px;color:#e0e0e0;transform:scaleX(0.91);">Булевы функции</span>
<svg style="left:348.3px;top:507.8px;background:#404040;" width="17" height="17" viewBox="0 0 17 17"><path d="M3.2 13.2V4.1L6.9 3H12.2V7M3.2 13.2H12.2L14 7H8.3Q6.5 7 4.8 8.1" stroke="#d8d8d8" fill="none" stroke-width="1.1"/></svg>
<span class="t" style="left:372px;top:509.79999999999995px;font-size:9.3px;color:#e0e0e0;transform:scaleX(0.91);">Детекторы фронтов</span>
<svg style="left:348.3px;top:525.6px;background:#404040;" width="17" height="17" viewBox="0 0 17 17"><path d="M3.2 13.2V4.1L6.9 3H12.2V7M3.2 13.2H12.2L14 7H8.3Q6.5 7 4.8 8.1" stroke="#d8d8d8" fill="none" stroke-width="1.1"/></svg>
<span class="t" style="left:372px;top:527.6px;font-size:9.3px;color:#e0e0e0;transform:scaleX(0.91);">Логарифмические функции</span>
<svg style="left:348.3px;top:543.4px;background:#404040;" width="17" height="17" viewBox="0 0 17 17"><path d="M3.2 13.2V4.1L6.9 3H12.2V7M3.2 13.2H12.2L14 7H8.3Q6.5 7 4.8 8.1" stroke="#d8d8d8" fill="none" stroke-width="1.1"/></svg>
<span class="t" style="left:372px;top:545.4px;font-size:9.3px;color:#e0e0e0;transform:scaleX(0.91);">Математические функции</span>
<svg style="left:348.3px;top:561.2px;background:#404040;" width="17" height="17" viewBox="0 0 17 17"><path d="M3.2 13.2V4.1L6.9 3H12.2V7M3.2 13.2H12.2L14 7H8.3Q6.5 7 4.8 8.1" stroke="#d8d8d8" fill="none" stroke-width="1.1"/></svg>
<div style="left:533px;top:487px;width:12px;height:79px;background:#666666;"></div>
<svg style="left:534px;top:490px;" width="10" height="6" viewBox="0 0 10 6"><path d="M1 5H9L5 1Z" fill="#a0a0a0"/></svg>
<div style="left:535px;top:500px;width:8px;height:15px;background:#4b4b4b;"></div>
<div style="left:545px;top:487px;width:1px;height:79px;background:#2a2a2a;"></div>
<div style="left:547.5px;top:462px;width:1.5px;height:104px;background:repeating-linear-gradient(to bottom,#3a3a3a 0 1.5px,#666 1.5px 3px);"></div>
<div style="left:554px;top:471.3px;width:30px;height:15.5px;border:1.7px solid #5a8db6;color:#e0e0e0;font-size:9.6px;line-height:18px;text-align:center;"><span style="position:static;display:inline-block;transform:scaleX(0.88)">AND</span></div>
<div style="left:595px;top:471.3px;width:24px;height:15.5px;border:1.7px solid #5a8db6;color:#e0e0e0;font-size:9.6px;line-height:18px;text-align:center;"><span style="position:static;display:inline-block;transform:scaleX(0.88)">OR</span></div>
<div style="left:630px;top:471.3px;width:28px;height:15.5px;border:1.7px solid #5a8db6;color:#e0e0e0;font-size:9.6px;line-height:18px;text-align:center;"><span style="position:static;display:inline-block;transform:scaleX(0.88)">XOR</span></div>
<div style="left:669px;top:471.3px;width:29px;height:15.5px;border:1.7px solid #5a8db6;color:#e0e0e0;font-size:9.6px;line-height:18px;text-align:center;"><span style="position:static;display:inline-block;transform:scaleX(0.88)">NOT</span></div>
<div style="left:709.3px;top:471.3px;width:34.700000000000045px;height:15.5px;border:1.7px solid #5a8db6;color:#e0e0e0;font-size:9.6px;line-height:18px;text-align:center;"><span style="position:static;display:inline-block;transform:scaleX(0.88)">GetBit</span></div>
<div style="left:755.2px;top:471.3px;width:33.39999999999998px;height:15.5px;border:1.7px solid #5a8db6;color:#e0e0e0;font-size:9.6px;line-height:18px;text-align:center;"><span style="position:static;display:inline-block;transform:scaleX(0.88)">SetBit</span></div>
<div style="left:951.5px;top:441px;width:22.5px;height:23px;background:#262626;"></div>
<svg style="left:955px;top:444.5px;" width="16" height="16" viewBox="0 0 16 16"><path d="M1.5 1.5H6.5V6.5H1.5ZM9.5 1.5H14.5V6.5H9.5ZM1.5 9.5H6.5V14.5H1.5ZM9.5 9.5H14.5V14.5H9.5Z" stroke="#e8e8e8" fill="none" stroke-width="1"/></svg>
<div style="left:975px;top:441px;width:22.5px;height:23px;background:#666666;"></div>
<svg style="left:978px;top:444.5px;" width="16" height="16" viewBox="0 0 16 16"><path d="M1.5 1.5H14.5V14.5H1.5ZM1.5 5H14.5M1.5 8H14.5M1.5 11H14.5M5 1.5V14.5" stroke="#e8e8e8" fill="none" stroke-width="1"/></svg>
<div style="left:999px;top:441px;width:22px;height:23px;background:#5e5e5e;"></div>
<svg style="left:1002px;top:444.5px;" width="16" height="16" viewBox="0 0 16 16"><path d="M1.5 1.5H5V14.5H1.5ZM6.5 1.5H10V14.5H6.5ZM11.5 1.5H15V14.5H11.5Z" stroke="#e8e8e8" fill="none" stroke-width="1"/></svg>
<div style="left:611.5px;top:50.3px;width:103px;height:96px;background:#b59393;border:1px solid #5e4c4c;"></div>
<div style="left:698.5px;top:51.3px;width:16.5px;height:16.5px;background:#b08c8c;border-left:1px solid #4a3a3a;border-bottom:1px solid #4a3a3a;"></div>
<svg style="left:703px;top:55px;" width="8" height="9" viewBox="0 0 8 9"><path d="M0.5 0.5V8.5L7.5 4.5Z" fill="#111111"/></svg>
<span class="t" style="left:617.5px;top:53px;font-size:10.2px;color:#161616;transform:scaleX(0.83);-webkit-text-stroke:0.05px currentColor;">[Comtrade]</span>
<span class="t" style="left:606px;top:53px;font-size:10.2px;color:#161616;transform:scaleX(0.83);-webkit-text-stroke:0.05px currentColor;">0</span>
<span class="t" style="left:718px;top:53px;font-size:10.2px;color:#161616;transform:scaleX(0.83);-webkit-text-stroke:0.05px currentColor;">EXT</span>
<span class="t" style="left:615.8px;top:73.3px;font-size:10.2px;color:#161616;transform:scaleX(0.83);-webkit-text-stroke:0.05px currentColor;">En</span>
<span class="t" style="left:615.8px;top:88.5px;font-size:10.2px;color:#161616;transform:scaleX(0.83);-webkit-text-stroke:0.05px currentColor;">FileName</span>
<span class="t" style="left:615.8px;top:104px;font-size:10.2px;color:#161616;transform:scaleX(0.83);-webkit-text-stroke:0.05px currentColor;">Run</span>
<span class="t" style="left:640px;width:69px;text-align:right;top:73.3px;font-size:10.2px;color:#161616;-webkit-text-stroke:0.05px currentColor;transform-origin:100% 50%;transform:scaleX(0.83);">EnO</span>
<span class="t" style="left:640px;width:69px;text-align:right;top:88.7px;font-size:10.2px;color:#161616;-webkit-text-stroke:0.05px currentColor;transform-origin:100% 50%;transform:scaleX(0.83);">Error</span>
<span class="t" style="left:640px;width:69px;text-align:right;top:104px;font-size:10.2px;color:#161616;-webkit-text-stroke:0.05px currentColor;transform-origin:100% 50%;transform:scaleX(0.83);">Begin</span>
<span class="t" style="left:640px;width:69px;text-align:right;top:119.3px;font-size:10.2px;color:#161616;-webkit-text-stroke:0.05px currentColor;transform-origin:100% 50%;transform:scaleX(0.83);">End</span>
<span class="t" style="left:640px;width:69px;text-align:right;top:134.5px;font-size:10.2px;color:#161616;-webkit-text-stroke:0.05px currentColor;transform-origin:100% 50%;transform:scaleX(0.83);">TriggerPoint</span>
<div style="left:575.7px;top:72.2px;width:35px;height:14px;box-sizing:border-box;background:#fff;border:1px solid #333;border-right-color:#aaa;border-bottom-color:#aaa;font-size:8px;line-height:12px;color:#222;padding-left:1.5px;"><span style="position:static;display:inline-block;transform-origin:0 50%;transform:scaleX(0.9)">True</span></div>
<svg style="left:563px;top:87px" width="50" height="32" viewBox="0 0 50 32">
<path d="M10 1H47.5V14.5H19.5Z M10 1L19.5 14.5" fill="none"/>
<path d="M19.7 1H47.5V14.5H19.7L10.3 7.7Z" fill="#7099b9" stroke="#4a5a66" stroke-width="0.8"/>
<path d="M10.8 16.4H47.5V30H10.8L1.8 23.2Z" fill="#7099b9" stroke="#4a5a66" stroke-width="0.8"/>
<path d="M40 23.2H49" stroke="#333" stroke-width="0.8"/>
</svg>
<span class="t" style="left:563px;width:43px;text-align:right;top:87.5px;font-size:9.3px;color:#c9d6e2;transform-origin:100% 50%;transform:scaleX(0.88);">Путь</span>
<span class="t" style="left:563px;width:43px;text-align:right;top:103px;font-size:9.3px;color:#c9d6e2;transform-origin:100% 50%;transform:scaleX(0.88);">Запуск</span>
<div style="left:717.8px;top:71.9px;width:35px;height:14px;box-sizing:border-box;background:#fff;border:1px solid #333;border-right-color:#aaa;border-bottom-color:#aaa;font-size:8px;line-height:12px;color:#222;padding-left:1.5px;"><span style="position:static;display:inline-block;transform-origin:0 50%;transform:scaleX(0.9)">True</span></div>
<div style="left:717.8px;top:103px;width:35px;height:14px;box-sizing:border-box;background:#fff;border:1px solid #333;border-right-color:#aaa;border-bottom-color:#aaa;font-size:8px;line-height:12px;color:#222;padding-left:1px;overflow:hidden;white-space:nowrap;"><span style="position:static;display:inline-block;transform-origin:0 50%;transform:scaleX(0.85)">0001-01-0</span></div>
<div style="left:717.8px;top:133.4px;width:35px;height:14px;box-sizing:border-box;background:#fff;border:1px solid #333;border-right-color:#aaa;border-bottom-color:#aaa;font-size:8px;line-height:12px;color:#222;padding-left:1px;overflow:hidden;white-space:nowrap;"><span style="position:static;display:inline-block;transform-origin:0 50%;transform:scaleX(0.85)">0001-01-0</span></div>
<svg style="left:717px;top:87px" width="55" height="47" viewBox="0 0 55 47">
<path d="M1 1.3H43.7L52.5 8L43.7 14.7H1Z" fill="#7099b9" stroke="#4a5a66" stroke-width="0.8"/>
<path d="M1 31.8H34.2L44.2 38.5L34.2 45.3H1Z" fill="#7099b9" stroke="#4a5a66" stroke-width="0.8"/>
</svg>
<span class="t" style="left:723.3px;top:88px;font-size:9.3px;color:#bfd0de;transform:scaleX(0.91);">Ошибка</span>
<span class="t" style="left:723.3px;top:118.5px;font-size:9.3px;color:#bfd0de;transform:scaleX(0.91);">Конец</span>
</body></html>
